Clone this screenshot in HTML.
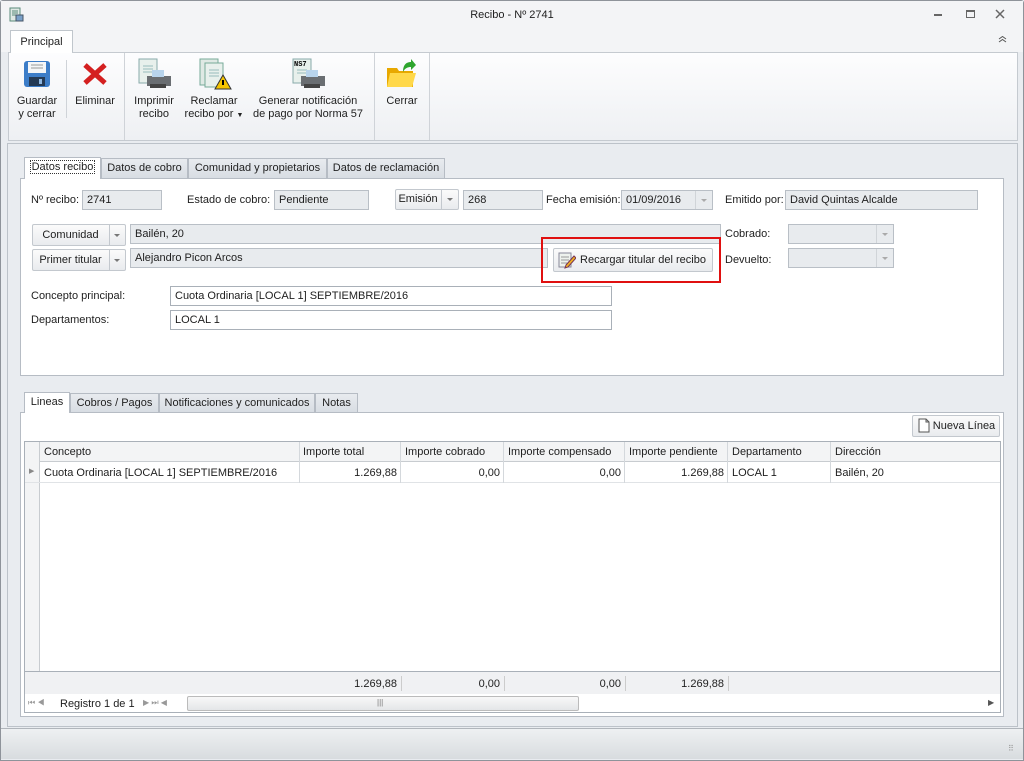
<!DOCTYPE html><html><head><meta charset="utf-8"><style>
*{box-sizing:border-box;margin:0;padding:0}
body{width:1024px;height:761px;background:#e9ecf0;font-family:"Liberation Sans",sans-serif;font-size:11px;color:#1e1e1e;position:relative;overflow:hidden}
.a{position:absolute}
.inp{position:absolute;background:#e8ebee;border:1px solid #b9bfc6;height:20px;padding:2px 4px;line-height:14px;white-space:nowrap}
.wh{background:#fff;border-color:#a9b0b8}
.lbl{position:absolute;white-space:nowrap}
.btn{position:absolute;border:1px solid #c3c8ce;border-radius:2px;background:linear-gradient(#fbfbfb,#e9ebee);height:22px;line-height:20px;text-align:center;white-space:nowrap}
.dd{position:absolute;width:0;height:0;border-left:3px solid transparent;border-right:3px solid transparent;border-top:3px solid #777}
.tab{position:absolute;height:21px;border:1px solid #b6bcc4;border-bottom:none;background:linear-gradient(#e8ebef,#d8dde3);line-height:19px;text-align:center;color:#222;white-space:nowrap}
.tab.on{background:#fff;height:22px}
.rb{position:absolute;text-align:center;line-height:13px;color:#222;white-space:nowrap}
.sep{position:absolute;width:1px;background:#cfd3d8}
.col{position:absolute;top:0;height:100%;border-left:1px solid #d4d8dc}
</style></head><body>
<div class="a" style="left:0;top:0;width:1024px;height:761px;border:1px solid #8e939a;border-radius:3px 3px 0 0"></div>
<div class="a" style="left:1px;top:1px;width:1022px;height:51px;background:#f3f4f6"></div>
<svg class="a" style="left:9px;top:7px" width="16" height="16"><rect x="1" y="1" width="10" height="13" fill="#dfe8e4" stroke="#5a8a7a"/><path d="M3 4h6M3 6h6M3 8h6" stroke="#5a8a7a"/><rect x="7" y="8" width="7" height="6" fill="#7aa0c8" stroke="#456"/></svg>
<div class="lbl" style="left:0;width:1024px;text-align:center;top:9px;font-size:11px">Recibo - Nº 2741</div>
<div class="lbl" style="left:934px;top:14px;width:8px;height:2px;background:#666"></div>
<div class="a" style="left:966px;top:10px;width:9px;height:8px;border:1px solid #666;border-top-width:2px"></div>
<svg class="a" style="left:995px;top:9px" width="10" height="10"><path d="M1 1L9 9M9 1L1 9" stroke="#666" stroke-width="1.5"/></svg>
<svg class="a" style="left:998px;top:36px" width="9" height="7"><path d="M1 3l3.5-2.5L8 3M1 6l3.5-2.5L8 6" fill="none" stroke="#555"/></svg>
<div class="tab on" style="left:10px;top:30px;width:63px;height:23px;line-height:22px;border-color:#c0c6cc">Principal</div>
<div class="a" style="left:8px;top:52px;width:1010px;height:89px;background:linear-gradient(#fdfdfe,#eef0f3);border:1px solid #c5cad0"></div>
<div class="a" style="left:11px;top:52px;width:61px;height:1px;background:#fff"></div>
<div class="sep" style="left:66px;top:60px;height:58px"></div>
<div class="sep" style="left:124px;top:53px;height:87px"></div>
<div class="sep" style="left:374px;top:53px;height:87px"></div>
<div class="sep" style="left:429px;top:53px;height:87px"></div>
<svg class="a" style="left:23px;top:60px" width="28" height="28"><rect x="1" y="1" width="26" height="26" rx="3" fill="#3c7dc8"/><rect x="5" y="2" width="18" height="11" fill="#f4f6f8"/><path d="M8 5h12M8 8h12" stroke="#999"/><rect x="6" y="17" width="16" height="9" fill="#243a55"/><rect x="16" y="19" width="3" height="5" fill="#8fb7e0"/></svg>
<div class="rb" style="left:14px;top:95px;width:46px">Guardar<br>y cerrar</div>
<svg class="a" style="left:82px;top:62px" width="26" height="24"><path d="M3 3L23 21M23 3L3 21" stroke="#d42020" stroke-width="5"/></svg>
<div class="rb" style="left:72px;top:95px;width:46px">Eliminar</div>
<svg class="a" style="left:138px;top:58px" width="34" height="32"><rect x="1" y="1" width="18" height="24" fill="#e8f0ec" stroke="#8aa"/><path d="M5 8h10M5 11h10M5 14h10" stroke="#9bb"/><rect x="9" y="18" width="24" height="10" fill="#6a6e72"/><rect x="14" y="12" width="12" height="7" fill="#b8d4ec"/><rect x="12" y="26" width="16" height="4" fill="#444"/></svg>
<div class="rb" style="left:130px;top:95px;width:48px">Imprimir<br>recibo</div>
<svg class="a" style="left:199px;top:58px" width="34" height="32"><rect x="1" y="1" width="18" height="26" fill="#dfe9e4" stroke="#7a9"/><rect x="6" y="5" width="18" height="24" fill="#e8f0ec" stroke="#7a9"/><path d="M10 12h10M10 15h10M10 18h10" stroke="#9bb"/><path d="M24 17L32 31H16Z" fill="#f5c400" stroke="#333"/><path d="M24 22v5" stroke="#000" stroke-width="2"/></svg>
<div class="rb" style="left:180px;top:95px;width:68px">Reclamar<br>recibo por <span style="font-size:7px">▼</span></div>
<svg class="a" style="left:292px;top:58px" width="34" height="32"><rect x="1" y="1" width="18" height="24" fill="#e8f0ec" stroke="#8aa"/><text x="2" y="8" font-size="7" font-family="Liberation Mono" font-weight="bold">NS7</text><path d="M5 12h10M5 15h10" stroke="#9bb"/><rect x="9" y="18" width="24" height="10" fill="#6a6e72"/><rect x="14" y="12" width="12" height="7" fill="#b8d4ec"/><rect x="12" y="26" width="16" height="4" fill="#444"/></svg>
<div class="rb" style="left:250px;top:95px;width:116px">Generar notificación<br>de pago por Norma 57</div>
<svg class="a" style="left:385px;top:58px" width="32" height="32"><path d="M2 10h10l2 3h14v16H2Z" fill="#e8a800"/><path d="M5 15h26l-4 14H2Z" fill="#ffd84a"/><path d="M18 14C18 6 22 4 26 4l0-3 5 6-5 5v-3c-3 0-6 1-8 5Z" fill="#2ea52e"/></svg>
<div class="rb" style="left:380px;top:95px;width:44px">Cerrar</div>
<div class="a" style="left:7px;top:143px;width:1011px;height:584px;border:1px solid #bcc2c9;background:#e9ecf0"></div>
<div class="tab on" style="left:24px;top:157px;width:77px"><span style="border:1px dotted #333;padding:0 1px">Datos recibo</span></div>
<div class="tab" style="left:101px;top:158px;width:87px;height:20px">Datos de cobro</div>
<div class="tab" style="left:188px;top:158px;width:139px;height:20px">Comunidad y propietarios</div>
<div class="tab" style="left:327px;top:158px;width:118px;height:20px">Datos de reclamación</div>
<div class="a" style="left:20px;top:178px;width:984px;height:198px;background:#fff;border:1px solid #b6bcc4"></div>
<div class="a" style="left:25px;top:177px;width:75px;height:2px;background:#fff"></div>
<div class="lbl" style="left:31px;top:194px">Nº recibo:</div><div class="inp" style="left:82px;top:190px;width:80px">2741</div>
<div class="lbl" style="left:187px;top:194px">Estado de cobro:</div><div class="inp" style="left:274px;top:190px;width:95px">Pendiente</div>
<div class="btn" style="left:395px;top:189px;width:64px;height:21px;line-height:19px;padding-right:18px">Emisión</div><div class="a" style="left:441px;top:190px;width:1px;height:19px;background:#c3c8ce"></div><div class="dd" style="left:447px;top:198px"></div>
<div class="inp" style="left:463px;top:190px;width:80px">268</div>
<div class="lbl" style="left:546px;top:194px">Fecha emisión:</div><div class="inp" style="left:621px;top:190px;width:92px">01/09/2016</div><div class="a" style="left:695px;top:191px;width:1px;height:18px;background:#d0d4d8"></div><div class="dd" style="left:701px;top:199px;border-top-color:#aaa"></div>
<div class="lbl" style="left:725px;top:194px">Emitido por:</div><div class="inp" style="left:785px;top:190px;width:193px">David Quintas Alcalde</div>
<div class="btn" style="left:32px;top:224px;width:94px;padding-right:17px">Comunidad</div><div class="a" style="left:109px;top:225px;width:1px;height:20px;background:#c3c8ce"></div><div class="dd" style="left:114px;top:234px"></div>
<div class="inp" style="left:130px;top:224px;width:591px">Bailén, 20</div>
<div class="lbl" style="left:725px;top:228px">Cobrado:</div><div class="inp" style="left:788px;top:224px;width:106px"></div><div class="a" style="left:876px;top:225px;width:1px;height:18px;background:#d0d4d8"></div><div class="dd" style="left:882px;top:233px;border-top-color:#aaa"></div>
<div class="btn" style="left:32px;top:249px;width:94px;padding-right:17px">Primer titular</div><div class="a" style="left:109px;top:250px;width:1px;height:20px;background:#c3c8ce"></div><div class="dd" style="left:114px;top:259px"></div>
<div class="inp" style="left:130px;top:248px;width:418px">Alejandro Picon Arcos</div>
<div class="btn" style="left:553px;top:248px;width:160px;height:24px;line-height:22px;padding-left:20px">Recargar titular del recibo</div>
<svg class="a" style="left:558px;top:251px" width="18" height="18"><rect x="1" y="2" width="12" height="14" fill="#eef2ee" stroke="#889"/><path d="M3 6h8M3 9h8M3 12h6" stroke="#999"/><path d="M8 14l8-9 2 2-8 9-3 1Z" fill="#f0b020" stroke="#735"/></svg>
<div class="a" style="left:541px;top:237px;width:180px;height:46px;border:2px solid #e01010"></div>
<div class="lbl" style="left:725px;top:254px">Devuelto:</div><div class="inp" style="left:788px;top:248px;width:106px"></div><div class="a" style="left:876px;top:249px;width:1px;height:18px;background:#d0d4d8"></div><div class="dd" style="left:882px;top:257px;border-top-color:#aaa"></div>
<div class="lbl" style="left:31px;top:290px">Concepto principal:</div><div class="inp wh" style="left:170px;top:286px;width:442px">Cuota Ordinaria [LOCAL 1] SEPTIEMBRE/2016</div>
<div class="lbl" style="left:31px;top:314px">Departamentos:</div><div class="inp wh" style="left:170px;top:310px;width:442px">LOCAL 1</div>
<div class="tab on" style="left:24px;top:392px;width:46px">Lineas</div>
<div class="tab" style="left:70px;top:393px;width:89px;height:19px;line-height:18px">Cobros / Pagos</div>
<div class="tab" style="left:159px;top:393px;width:156px;height:19px;line-height:18px">Notificaciones y comunicados</div>
<div class="tab" style="left:315px;top:393px;width:43px;height:19px;line-height:18px">Notas</div>
<div class="a" style="left:20px;top:412px;width:984px;height:305px;background:#fff;border:1px solid #b6bcc4"></div>
<div class="a" style="left:25px;top:411px;width:44px;height:2px;background:#fff"></div>
<div class="btn" style="left:912px;top:415px;width:88px;height:22px;padding-left:16px">Nueva Línea</div>
<svg class="a" style="left:918px;top:418px" width="12" height="15"><path d="M1 1h7l3 3v10H1Z" fill="#fff" stroke="#555"/><path d="M8 1v3h3" fill="none" stroke="#555"/></svg>
<div class="a" style="left:24px;top:441px;width:977px;height:272px;border:1px solid #a9b0b8;background:#fff;overflow:hidden">
 <div class="a" style="left:0;top:0;width:977px;height:20px;background:#f3f4f5;border-bottom:1px solid #c8ccd0"></div>
 <div class="a" style="left:0;top:0;width:15px;height:229px;background:#f3f4f5;border-right:1px solid #c8ccd0"></div>
 <div class="a" style="left:0;top:40px;width:977px;height:1px;background:#e0e3e6"></div>
 <div class="a" style="left:0;top:0;width:977px;height:41px">
  <div class="col" style="left:274px"></div><div class="col" style="left:375px"></div><div class="col" style="left:478px"></div><div class="col" style="left:599px"></div><div class="col" style="left:702px"></div><div class="col" style="left:805px"></div>
 </div>
 <div class="lbl" style="left:19px;top:4px">Concepto</div>
 <div class="lbl" style="left:278px;top:4px">Importe total</div>
 <div class="lbl" style="left:380px;top:4px">Importe cobrado</div>
 <div class="lbl" style="left:483px;top:4px">Importe compensado</div>
 <div class="lbl" style="left:604px;top:4px">Importe pendiente</div>
 <div class="lbl" style="left:707px;top:4px">Departamento</div>
 <div class="lbl" style="left:810px;top:4px">Dirección</div>
 <div class="lbl" style="left:4px;top:25px;font-size:7px;color:#888">▶</div>
 <div class="lbl" style="left:19px;top:25px">Cuota Ordinaria [LOCAL 1] SEPTIEMBRE/2016</div>
 <div class="lbl" style="left:274px;width:98px;text-align:right;top:25px">1.269,88</div>
 <div class="lbl" style="left:375px;width:100px;text-align:right;top:25px">0,00</div>
 <div class="lbl" style="left:478px;width:118px;text-align:right;top:25px">0,00</div>
 <div class="lbl" style="left:599px;width:100px;text-align:right;top:25px">1.269,88</div>
 <div class="lbl" style="left:707px;top:25px">LOCAL 1</div>
 <div class="lbl" style="left:810px;top:25px">Bailén, 20</div>
 <div class="a" style="left:0;top:229px;width:977px;height:23px;background:#f0f1f3;border-top:1px solid #a9b0b8"></div>
 <div class="lbl" style="left:274px;width:98px;text-align:right;top:236px">1.269,88</div>
 <div class="lbl" style="left:375px;width:100px;text-align:right;top:236px">0,00</div>
 <div class="lbl" style="left:478px;width:118px;text-align:right;top:236px">0,00</div>
 <div class="lbl" style="left:599px;width:100px;text-align:right;top:236px">1.269,88</div>
 <div class="a" style="left:376px;top:234px;width:1px;height:15px;background:#ccc"></div><div class="a" style="left:479px;top:234px;width:1px;height:15px;background:#ccc"></div><div class="a" style="left:600px;top:234px;width:1px;height:15px;background:#ccc"></div><div class="a" style="left:703px;top:234px;width:1px;height:15px;background:#ccc"></div>
 <div class="a" style="left:0;top:252px;width:977px;height:20px;background:#fff"></div>
 <div class="lbl" style="left:3px;top:256px;font-size:8px;color:#999">⏮ ◀</div>
 <div class="lbl" style="left:35px;top:256px">Registro 1 de 1</div>
 <div class="lbl" style="left:118px;top:256px;font-size:8px;color:#999">▶ ⏭ ◀</div>
 <div class="a" style="left:162px;top:254px;width:392px;height:15px;border:1px solid #bbb;border-radius:2px;background:linear-gradient(#f8f8f8,#e4e6e8)"></div>
 <div class="lbl" style="left:352px;top:256px;font-size:8px;color:#777">|||</div>
 <div class="lbl" style="left:963px;top:256px;font-size:8px;color:#555">▶</div>
</div>
<div class="a" style="left:1px;top:728px;width:1022px;height:31px;background:linear-gradient(#eef0f2,#d8dcdf);border-top:1px solid #b0b5bb"></div>
<div class="lbl" style="left:1008px;top:744px;font-size:8px;color:#999;letter-spacing:-1px">⠿</div>
</body></html>
